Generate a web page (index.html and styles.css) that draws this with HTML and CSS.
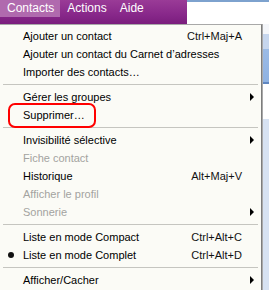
FILE: index.html
```html
<!DOCTYPE html>
<html lang="fr">
<head>
    <meta charset="UTF-8">
    <meta name="viewport" content="width=device-width, initial-scale=1.0">
    <title>Contacts</title>
    <link rel="stylesheet" href="styles.css">
</head>
<body>
    <div class="screen">
        <header class="topbar">
            <nav class="menubar" aria-label="Menu principal">
                <span class="menubar-item active">Contacts</span>
                <span class="menubar-item">Actions</span>
                <span class="menubar-item">Aide</span>
            </nav>
            <div class="window-top"></div>
        </header>

        <div class="body-row">
            <ul class="dropdown" role="menu">
                <li class="item" role="menuitem"><span class="label">Ajouter un contact</span><span class="shortcut">Ctrl+Maj+A</span><span class="sub"></span></li>
                <li class="item" role="menuitem"><span class="label">Ajouter un contact du Carnet d’adresses</span><span class="shortcut"></span><span class="sub"></span></li>
                <li class="item" role="menuitem"><span class="label">Importer des contacts…</span><span class="shortcut"></span><span class="sub"></span></li>
                <li class="separator" role="separator"></li>
                <li class="item" role="menuitem"><span class="label">Gérer les groupes</span><span class="shortcut"></span><span class="sub"><i class="arrow"></i></span></li>
                <li class="item" role="menuitem"><span class="label">Supprimer…</span><span class="shortcut"></span><span class="sub"></span></li>
                <li class="separator" role="separator"></li>
                <li class="item" role="menuitem"><span class="label">Invisibilité sélective</span><span class="shortcut"></span><span class="sub"><i class="arrow"></i></span></li>
                <li class="item disabled" role="menuitem"><span class="label">Fiche contact</span><span class="shortcut"></span><span class="sub"></span></li>
                <li class="item" role="menuitem"><span class="label">Historique</span><span class="shortcut">Alt+Maj+V</span><span class="sub"></span></li>
                <li class="item disabled" role="menuitem"><span class="label">Afficher le profil</span><span class="shortcut"></span><span class="sub"></span></li>
                <li class="item disabled" role="menuitem"><span class="label">Sonnerie</span><span class="shortcut"></span><span class="sub"><i class="arrow"></i></span></li>
                <li class="separator" role="separator"></li>
                <li class="item" role="menuitemradio"><span class="label">Liste en mode Compact</span><span class="shortcut">Ctrl+Alt+C</span><span class="sub"></span></li>
                <li class="item checked" role="menuitemradio"><span class="label">Liste en mode Complet</span><span class="shortcut">Ctrl+Alt+D</span><span class="sub"></span></li>
                <li class="separator" role="separator"></li>
                <li class="item" role="menuitem"><span class="label">Afficher/Cacher</span><span class="shortcut"></span><span class="sub"><i class="arrow"></i></span></li>
            </ul>
            <div class="window-side"></div>
        </div>

        <!-- red highlight drawn around "Supprimer…" -->
        <div class="annotation"></div>
    </div>
</body>
</html>
```

FILE: styles.css
```css
body {
    margin: 0;
    background: #ffffff;
    font-family: "Liberation Sans", "DejaVu Sans", sans-serif;
    font-size: 11px;
    color: #000000;
}

.screen {
    position: relative;
    width: 269px;
    height: 290px;
    overflow: hidden;
}

.topbar {
    display: flex;
    height: 24px;
}

.menubar {
    display: flex;
    align-items: flex-start;
    width: 187px;
    background: linear-gradient(to bottom, #9a3b97, #88288a 60%, #7a1d7d);
}

.menubar-item {
    height: 17px;
    line-height: 17px;
    padding: 0 6px 0 7px;
    color: #ffffff;
    font-size: 12px;
}

.menubar-item.active {
    background: #b06aae;
}

.window-top {
    flex: 1;
    background: #ffffff;
    border-top: 2px solid #7da2ce;
}

.body-row {
    display: flex;
    height: 266px;
}

.dropdown {
    list-style: none;
    margin: 0;
    padding: 2px 0;
    width: 262px;
    box-sizing: border-box;
    background: #fbfbf6;
    border-top: 1px solid #a8a8a8;
    border-right: 1px solid #7d7d7d;
    box-shadow: 1px 0 0 #a9a9a9;
}

.item {
    display: grid;
    grid-template-columns: 1fr auto 19px;
    align-items: center;
    height: 18px;
    padding-left: 23px;
    position: relative;
}

.item.disabled {
    color: #a3a3a0;
}

.shortcut {
    color: #111111;
}

.sub {
    display: flex;
    justify-content: flex-end;
    padding-right: 7px;
}

.arrow {
    display: block;
    width: 0;
    height: 0;
    border-top: 4px solid transparent;
    border-bottom: 4px solid transparent;
    border-left: 4px solid #000000;
}

.item.checked::before {
    content: "";
    position: absolute;
    left: 8px;
    top: 6px;
    width: 6px;
    height: 6px;
    border-radius: 50%;
    background: #111111;
}

.separator {
    height: 7px;
    margin: 0 3px;
    display: flex;
    align-items: center;
}

.separator::after {
    content: "";
    display: block;
    width: 100%;
    height: 1px;
    background: #c5c5c0;
}

.window-side {
    flex: 1;
    margin-left: 1px;
    background: linear-gradient(to bottom, #f4f6fa 0, #f4f6fa 10px, #c6d6ee 10px, #c6d6ee 25px, #9bbbe6 25px, #8fb2e2 58px, #5f86c0 58px, #5f86c0 60px, #ffffff 60px, #ffffff 95px, #d7e2f2 95px, #d7e2f2 100%);
}

.annotation {
    position: absolute;
    left: 8px;
    top: 103px;
    width: 84px;
    height: 21px;
    border: 2px solid #ff0000;
    border-radius: 7px;
}
```
